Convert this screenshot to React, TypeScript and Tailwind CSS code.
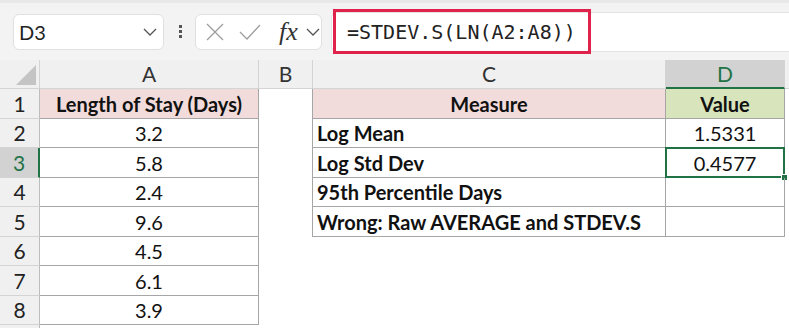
import React from "react";

const cellFont = { fontFamily: "Lato, 'Liberation Sans', sans-serif" };

const rows = [
  { n: 1, a: "Length of Stay (Days)", c: "Measure", d: "Value" },
  { n: 2, a: "3.2", c: "Log Mean", d: "1.5331" },
  { n: 3, a: "5.8", c: "Log Std Dev", d: "0.4577" },
  { n: 4, a: "2.4", c: "95th Percentile Days", d: "" },
  { n: 5, a: "9.6", c: "Wrong: Raw AVERAGE and STDEV.S", d: "" },
  { n: 6, a: "4.5", c: "", d: "" },
  { n: 7, a: "6.1", c: "", d: "" },
  { n: 8, a: "3.9", c: "", d: "" },
];

const Chevron = () => (
  <svg width="14" height="8" viewBox="0 0 14 8" fill="none">
    <path d="M1 1 L7 7 L13 1" stroke="#555" strokeWidth="1.3" />
  </svg>
);

const Toolbar = () => {
  return (
    <div className="flex items-center h-[60px] bg-[#f3f3f3] border-t-[3px] border-[#e8e8e8] pl-[13px]">
      <div className="flex items-center justify-between w-[151px] h-[36px] bg-white border border-[#e0e0e0] rounded-[6px] pl-[5px] pr-[6px]">
        <span className="text-[20px] text-[#222]" style={cellFont}>D3</span>
        <Chevron />
      </div>
      <div className="flex flex-col gap-[2px] ml-[15px] mr-[13px]">
        <div className="w-[3px] h-[3px] bg-[#555]"></div>
        <div className="w-[3px] h-[3px] bg-[#555]"></div>
        <div className="w-[3px] h-[3px] bg-[#555]"></div>
      </div>
      <div className="flex items-center w-[127px] h-[36px] bg-white border border-[#e0e0e0] rounded-[6px] pl-[10px]">
        <svg width="18" height="18" viewBox="0 0 18 18" fill="none">
          <path d="M1 1 L17 17 M17 1 L1 17" stroke="#9e9e9e" strokeWidth="1.3" />
        </svg>
        <svg className="ml-[15px]" width="22" height="16" viewBox="0 0 22 16" fill="none">
          <path d="M1 8 L8 15 L21 1" stroke="#9e9e9e" strokeWidth="1.3" />
        </svg>
        <span
          className="ml-[18px] text-[26px] italic text-[#333] leading-none"
          style={{ fontFamily: "'Liberation Serif', serif" }}
        >
          fx
        </span>
        <div className="ml-[8px]">
          <Chevron />
        </div>
      </div>
      <div className="flex items-center flex-1 h-[40px] ml-[9px] bg-white border-y border-l border-[#e4e4e4] rounded-l-[6px]">
        <div className="flex items-center w-[258px] h-[45px] ml-[1px] border-[3px] border-[#e0234a] pl-[11px]">
          <span
            className="text-[20px] text-[#222]"
            style={{ fontFamily: "'DejaVu Sans Mono', 'Liberation Mono', monospace" }}
          >
            =STDEV.S(LN(A2:A8))
          </span>
        </div>
      </div>
    </div>
  );
};

const HeaderRow = () => {
  const hd = "flex items-center justify-center shrink-0 h-full border-r border-b border-[#d4d4d4] text-[21px] text-[#333]";
  return (
    <div className="flex h-[29px] bg-[#f0f0f0]" style={cellFont}>
      <div className="relative w-[40px] shrink-0 h-full border-r border-b border-[#d4d4d4]">
        <svg className="absolute left-[16px] top-[5px]" width="20" height="20" viewBox="0 0 20 20">
          <polygon points="20,0 20,20 0,20" fill="#c4c4c4" />
        </svg>
      </div>
      <div className={`${hd} w-[219px]`}>A</div>
      <div className={`${hd} w-[54px]`}>B</div>
      <div className={`${hd} w-[353px]`}>C</div>
      <div className="flex items-center justify-center shrink-0 h-full w-[119px] bg-[#d2d2d2] border-r border-[#d4d4d4] border-b-2 border-b-[#217346] text-[21px] text-[#217346]">
        D
      </div>
      <div className="flex-1 border-b border-[#d4d4d4]"></div>
    </div>
  );
};

const Row = ({ r }: { r: any }) => {
  const tall = r.n % 2 === 1;
  const inTable = r.n <= 5;
  const head = r.n === 1;
  const sel = r.n === 3;
  return (
    <div className={`flex ${tall ? "h-[30px]" : "h-[29px]"} text-[20px] text-[#111]`} style={cellFont}>
      <div
        className={`flex items-center justify-center w-[40px] shrink-0 border-b border-[#d4d4d4] text-[21px] ${
          sel ? "bg-[#d2d2d2] text-[#217346] border-r-2 border-r-[#217346]" : "bg-[#f0f0f0] text-[#222] border-r border-r-[#bdbdbd]"
        }`}
      >
        {r.n}
      </div>
      <div
        className={`flex items-center justify-center w-[219px] shrink-0 border-r border-b border-[#a6a6a6] ${
          head ? "bg-[#f2dcdb] font-bold" : ""
        }`}
      >
        {r.a}
      </div>
      <div className={`w-[54px] shrink-0 ${inTable ? "border-r border-[#a6a6a6]" : ""}`}></div>
      {inTable ? (
        <>
          <div
            className={`flex items-center w-[353px] shrink-0 border-r border-b border-[#a6a6a6] font-bold ${
              head ? "bg-[#f2dcdb] justify-center" : "pl-[4px]"
            }`}
          >
            {r.c}
          </div>
          <div
            className={`relative flex items-center justify-center w-[119px] shrink-0 border-r border-b border-[#a6a6a6] ${
              head ? "bg-[#d8e4bc] font-bold" : ""
            }`}
          >
            {r.d}
            {sel && (
              <>
                <div className="absolute -left-[1px] -top-[1px] -right-[1px] -bottom-[1px] border-2 border-[#217346]"></div>
                <div className="absolute -right-[4px] -bottom-[4px] w-[7px] h-[7px] bg-[#217346] border border-white"></div>
              </>
            )}
          </div>
        </>
      ) : null}
    </div>
  );
};

export default function App() {
  return (
    <div className="w-[789px] h-[328px] overflow-hidden bg-white">
      <Toolbar />
      <HeaderRow />
      {rows.map((r) => (
        <Row key={r.n} r={r} />
      ))}
      <div className="flex h-[10px]">
        <div className="w-[40px] bg-[#f0f0f0] border-r border-[#bdbdbd]"></div>
      </div>
    </div>
  );
}
